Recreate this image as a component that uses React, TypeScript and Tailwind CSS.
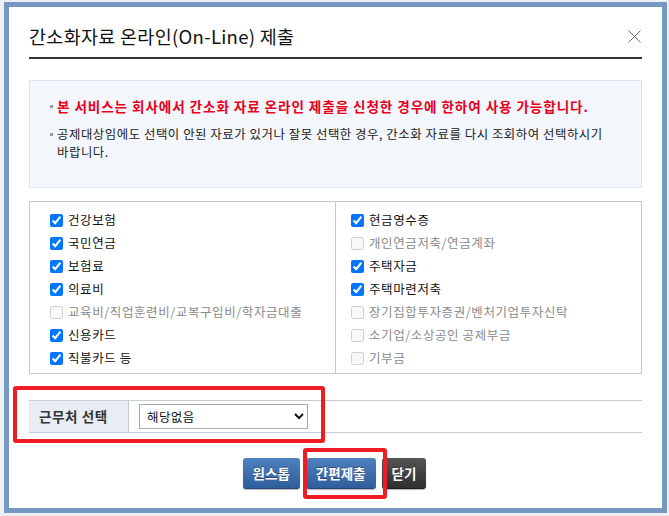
import React from "react";

const font = { fontFamily: '"Noto Sans CJK KR", "Noto Sans", sans-serif' };

type Item = { label: string; checked: boolean; disabled?: boolean };

const left: Item[] = [
  { label: "건강보험", checked: true },
  { label: "국민연금", checked: true },
  { label: "보험료", checked: true },
  { label: "의료비", checked: true },
  { label: "교육비/직업훈련비/교복구입비/학자금대출", checked: false, disabled: true },
  { label: "신용카드", checked: true },
  { label: "직불카드 등", checked: true },
];

const right: Item[] = [
  { label: "현금영수증", checked: true },
  { label: "개인연금저축/연금계좌", checked: false, disabled: true },
  { label: "주택자금", checked: true },
  { label: "주택마련저축", checked: true },
  { label: "장기집합투자증권/벤처기업투자신탁", checked: false, disabled: true },
  { label: "소기업/소상공인 공제부금", checked: false, disabled: true },
  { label: "기부금", checked: false, disabled: true },
];

function Row({ item }: { item: Item }) {
  return (
    <label className="flex h-[23px] items-center gap-[5px]">
      <input
        type="checkbox"
        defaultChecked={item.checked}
        disabled={item.disabled}
        className="m-0 h-[13px] w-[13px] accent-[#0075ff]"
      />
      <span
        className={
          "text-[12.5px] leading-none tracking-[0.6px] " +
          (item.disabled ? "text-[#8a8a8a]" : "text-[#111]")
        }
      >
        {item.label}
      </span>
    </label>
  );
}

const blueBtn =
  "h-[31px] rounded-[3px] border-b border-[#24497a] bg-gradient-to-b from-[#4f80bf] to-[#2f5e9b] px-[10px] text-[13.5px] font-bold text-white shadow-[0_1px_1px_rgba(0,0,0,0.3)] [text-shadow:0_-1px_0_rgba(0,0,0,0.35)]";

export default function App() {
  return (
    <div
      className="relative h-[516px] w-[669px] overflow-hidden bg-[#eef0f3] pl-[4px] pt-[2px]"
      style={font}
    >
      <div className="flex h-[511px] w-[663px] flex-col border-[5px] border-[#7598c2] bg-white px-[20px]">
        {/* header */}
        <div className="mt-[17px] flex h-[24px] items-center justify-between">
          <h1 className="text-[18.5px] font-normal leading-none tracking-[0.3px] text-[#111]">
            간소화자료 온라인(On-Line) 제출
          </h1>
          <svg width="13" height="13" viewBox="0 0 13 13" className="mr-[1px]">
            <path d="M0.5 0.5 L12.5 12.5 M12.5 0.5 L0.5 12.5" stroke="#5a6784" strokeWidth="1" fill="none" />
          </svg>
        </div>
        <div className="mt-[9px] h-[2px] w-full bg-[#333]" />

        {/* info box */}
        <div className="mt-[21px] h-[108px] border border-[#dde4ee] bg-[#f3f6fb] pl-[20px] pt-[16px]">
          <div className="flex h-[18px] items-center">
            <span className="mr-[4px] h-[3px] w-[3px] shrink-0 bg-[#9a9a9a]" />
            <span className="text-[13.6px] font-bold leading-[18px] tracking-[0.9px] text-[#e8001c]">
              본 서비스는 회사에서 간소화 자료 온라인 제출을 신청한 경우에 한하여 사용 가능합니다.
            </span>
          </div>
          <div className="mt-[10px] flex items-start">
            <span className="mr-[4px] mt-[8px] h-[3px] w-[3px] shrink-0 bg-[#9a9a9a]" />
            <span className="text-[12.4px] leading-[18px] tracking-[0.55px] text-[#222]">
              공제대상임에도 선택이 안된 자료가 있거나 잘못 선택한 경우, 간소화 자료를 다시 조회하여 선택하시기
              <br />
              바랍니다.
            </span>
          </div>
        </div>

        {/* checkbox table */}
        <div className="mt-[13px] grid h-[173px] grid-cols-[306px_1fr] border border-[#c8c8c8]">
          <div className="border-r border-[#c8c8c8] pl-[20px] pt-[7px]">
            {left.map((it) => (
              <Row key={it.label} item={it} />
            ))}
          </div>
          <div className="pl-[15px] pt-[7px]">
            {right.map((it) => (
              <Row key={it.label} item={it} />
            ))}
          </div>
        </div>

        {/* workplace */}
        <div className="mt-[26px] flex h-[33px] items-stretch border-y border-[#c5cdd9]">
          <div className="flex w-[100px] items-center border-r border-[#c5cdd9] bg-[#e8edf5] pl-[10px] text-[13.5px] font-bold tracking-[0.6px] text-[#333]">
            근무처 선택
          </div>
          <div className="flex items-center pl-[10px]">
            <select
              defaultValue="none"
              className="h-[25px] w-[169px] border border-[#a9a9a9] bg-white pl-[3px] text-[12.5px] tracking-[0.4px] text-[#111]"
              style={font}
            >
              <option value="none">해당없음</option>
            </select>
          </div>
        </div>

        {/* buttons */}
        <div className="mt-[25px] flex justify-center gap-[6px] pr-[2px]">
          <button className={blueBtn}>원스톱</button>
          <button className={blueBtn}>간편제출</button>
          <button className="h-[31px] rounded-[3px] border-b border-[#1e1e1e] bg-gradient-to-b from-[#555] to-[#303030] px-[10px] text-[13.5px] font-bold text-white shadow-[0_1px_1px_rgba(0,0,0,0.3)] [text-shadow:0_-1px_0_rgba(0,0,0,0.35)]">
            닫기
          </button>
        </div>
      </div>

      {/* annotation highlights */}
      <div className="pointer-events-none absolute left-[13px] top-[386px] h-[57px] w-[312px] rounded-[3px] border-[4px] border-[#ee1c25]" />
      <div className="pointer-events-none absolute left-[303px] top-[448px] h-[51px] w-[84px] rounded-[3px] border-[4px] border-[#ee1c25]" />
    </div>
  );
}
